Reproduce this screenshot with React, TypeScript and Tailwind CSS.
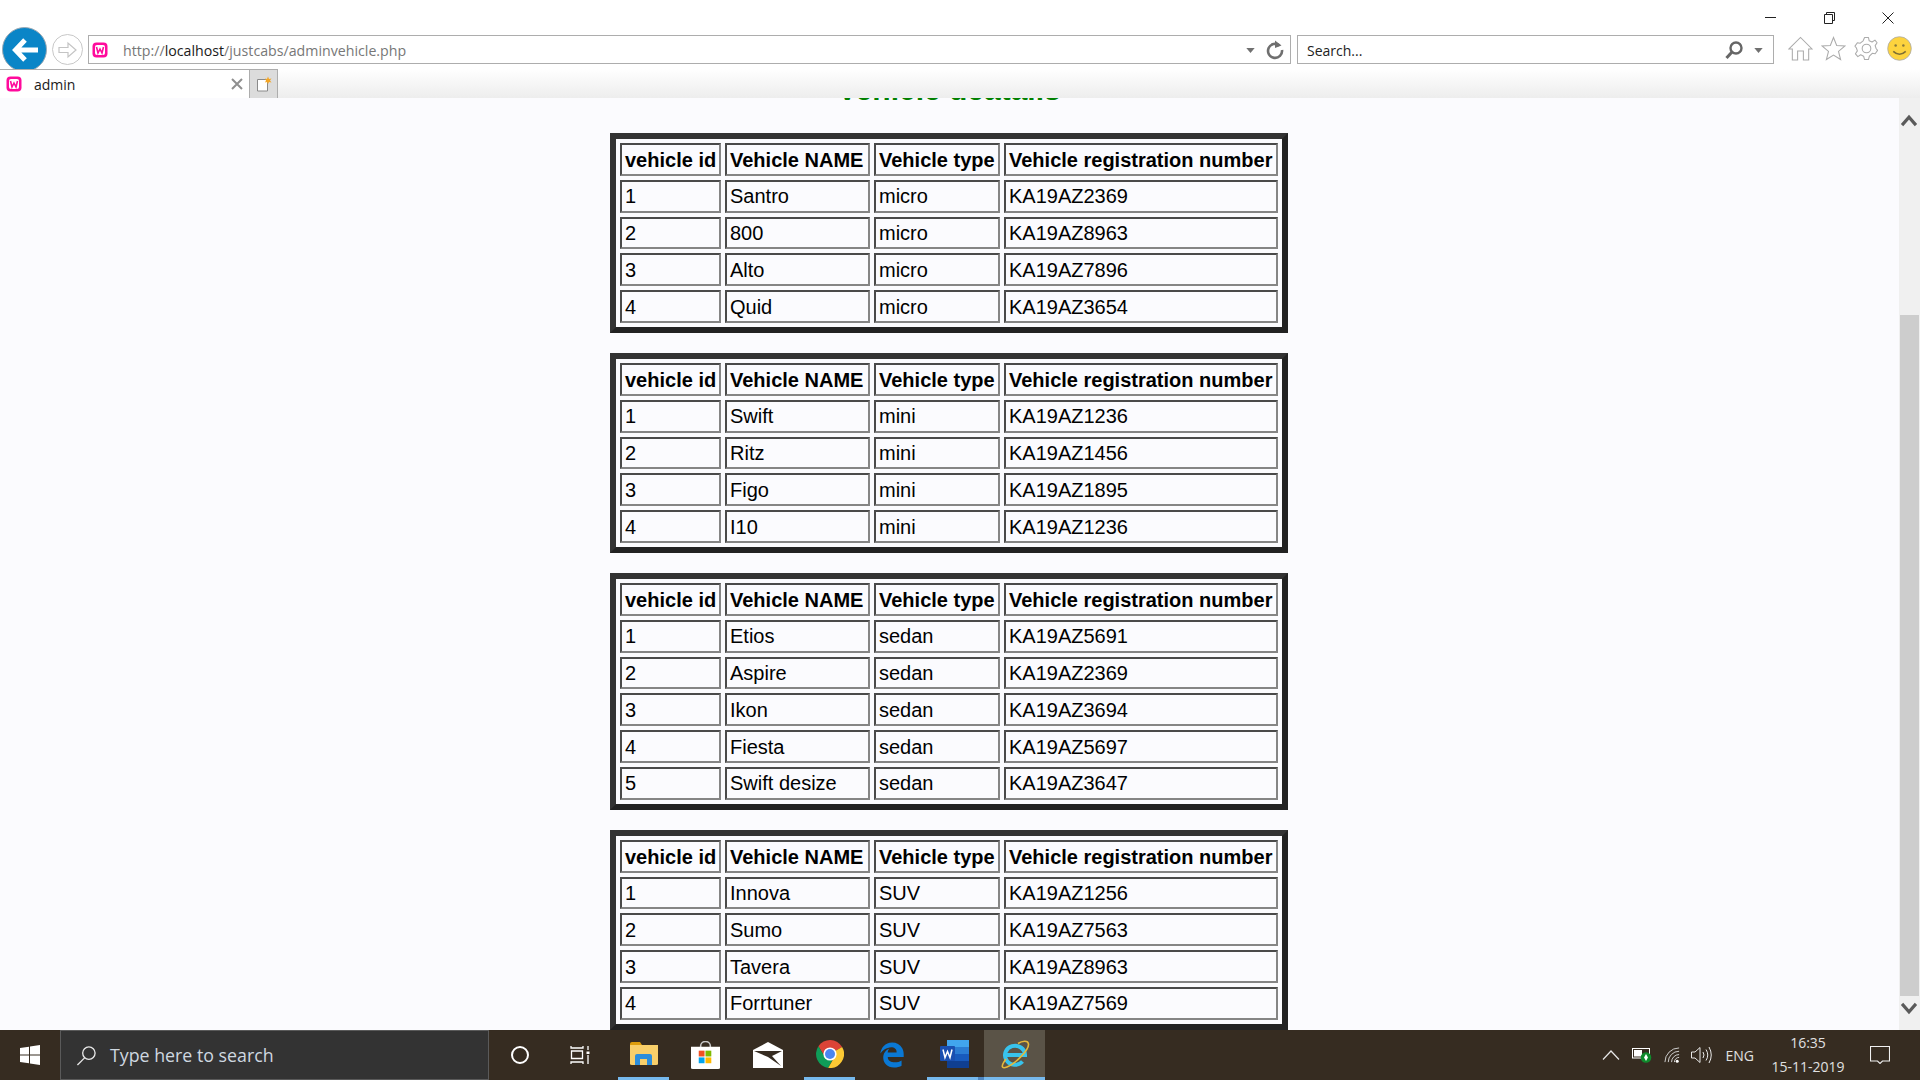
import { FaEdgeLegacy } from "react-icons/fa6";

type Row = [string, string, string];

const vehicleGroups: { type: string; rows: Row[] }[] = [
  {
    type: "micro",
    rows: [
      ["1", "Santro", "KA19AZ2369"],
      ["2", "800", "KA19AZ8963"],
      ["3", "Alto", "KA19AZ7896"],
      ["4", "Quid", "KA19AZ3654"],
    ],
  },
  {
    type: "mini",
    rows: [
      ["1", "Swift", "KA19AZ1236"],
      ["2", "Ritz", "KA19AZ1456"],
      ["3", "Figo", "KA19AZ1895"],
      ["4", "I10", "KA19AZ1236"],
    ],
  },
  {
    type: "sedan",
    rows: [
      ["1", "Etios", "KA19AZ5691"],
      ["2", "Aspire", "KA19AZ2369"],
      ["3", "Ikon", "KA19AZ3694"],
      ["4", "Fiesta", "KA19AZ5697"],
      ["5", "Swift desize", "KA19AZ3647"],
    ],
  },
  {
    type: "SUV",
    rows: [
      ["1", "Innova", "KA19AZ1256"],
      ["2", "Sumo", "KA19AZ7563"],
      ["3", "Tavera", "KA19AZ8963"],
      ["4", "Forrtuner", "KA19AZ7569"],
    ],
  },
];

const cell =
  "h-[32.8px] border-2 border-t-[#4a4a4a] border-l-[#4a4a4a] border-r-[#858585] border-b-[#858585] px-[3px] pb-0 text-left text-[20px] leading-[24px] whitespace-nowrap text-black";
const head = `${cell} pt-[2px] font-bold`;
const body = `${cell} pt-0`;

const VehicleTable = ({ type, rows }: { type: string; rows: Row[] }) => (
  <table className="w-[678px] table-fixed border-separate border-spacing-1 border-[6px] border-t-[#333333] border-l-[#333333] border-r-[#222222] border-b-[#222222]">
    <thead>
      <tr>
        <th className={`${head} w-[101px]`}>vehicle id</th>
        <th className={`${head} w-[145px]`}>Vehicle NAME</th>
        <th className={`${head} w-[126px]`}>Vehicle type</th>
        <th className={head}>Vehicle registration number</th>
      </tr>
    </thead>
    <tbody>
      {rows.map((r) => (
        <tr key={r[0]}>
          <td className={body}>{r[0]}</td>
          <td className={body}>{r[1]}</td>
          <td className={body}>{type}</td>
          <td className={body}>{r[2]}</td>
        </tr>
      ))}
    </tbody>
  </table>
);

const WampIcon = ({ className }: { className: string }) => (
  <svg viewBox="0 0 16 16" className={className}>
    <rect x="0.5" y="0.5" width="15" height="15" rx="4" fill="#ff0a9c" />
    <rect x="3" y="3" width="10" height="10" rx="2" fill="#fff" />
    <path d="M4.5 5 L6 11 L8 7 L10 11 L11.5 5" fill="none" stroke="#ff0a9c" strokeWidth="1.6" />
  </svg>
);

const BrowserChrome = () => (
  <header className="flex h-[98px] shrink-0 flex-col bg-white">
    <div className="flex h-[27px] shrink-0 items-start justify-end">
      <svg viewBox="0 0 12 12" className="mt-[12px] mr-[47px] size-3" stroke="#222" fill="none">
        <path d="M0 5.5 H11" />
      </svg>
      <svg viewBox="0 0 12 12" className="mt-[12px] mr-[46px] size-3" stroke="#222" fill="none">
        <path d="M2.5 2.5 V0.5 H10.5 V8.5 H8.5 M0.5 2.5 H8.5 V11.5 H0.5 Z" />
      </svg>
      <svg viewBox="0 0 12 12" className="mt-[12px] mr-[26px] size-3" stroke="#222" fill="none">
        <path d="M0.5 0.5 L11.5 11.5 M11.5 0.5 L0.5 11.5" />
      </svg>
    </div>

    <div className="flex h-[42px] shrink-0 items-start overflow-hidden pl-[2px]">
      <div className="flex size-[45px] shrink-0 items-center justify-center rounded-full border border-[#9aa9b4] bg-[#0a85c7]">
        <svg viewBox="0 0 28 28" className="size-[28px]" fill="none" stroke="#fff" strokeWidth="5">
          <path d="M14 4 L4.5 14 L14 24 M5 14 H27" />
        </svg>
      </div>
      <div className="mt-[7px] ml-[5px] flex size-[31px] shrink-0 items-center justify-center rounded-full border border-[#c8c8c8]">
        <svg viewBox="0 0 20 20" className="size-[20px]" fill="none" stroke="#c4c4c4" strokeWidth="1.2">
          <path d="M1 7.5 H10 V3 L18 10 L10 17 V12.5 H1 Z" />
        </svg>
      </div>
      <div className="mt-[8px] ml-[5px] flex h-[29px] w-[1203px] shrink-0 items-center border border-[#adadad] pr-[3px] pl-[3px]">
        <WampIcon className="size-4" />
        <span className="mt-[2px] ml-[15px] font-['Open_Sans',sans-serif] text-[14.2px] text-[#777777]">
          http://<span className="text-[#1a1a1a]">localhost</span>/justcabs/adminvehicle.php
        </span>
        <svg viewBox="0 0 10 6" className="mt-[2px] mr-[10px] ml-auto h-[5px] w-[9px]" fill="#707070">
          <path d="M0 0 H10 L5 6 Z" />
        </svg>
        <svg viewBox="0 0 20 20" className="mr-[2px] size-[20px]" fill="none" stroke="#6f6f6f" strokeWidth="2.6">
          <path d="M14.5 5.5 A7 7 0 1 0 17 10" />
          <path d="M10 0.5 L16.5 5.5 L10 8 Z" fill="#6f6f6f" stroke="none" />
        </svg>
      </div>
      <div className="mt-[8px] ml-[6px] flex h-[29px] w-[477px] shrink-0 items-center border border-[#adadad] pr-[10px] pl-[9px]">
        <span className="mt-[1px] font-['Open_Sans',sans-serif] text-[14px] text-[#222222]">Search...</span>
        <svg viewBox="0 0 20 20" className="mr-[10px] ml-auto size-[20px]" fill="none" stroke="#666" strokeWidth="2.4">
          <circle cx="12" cy="8" r="5.5" />
          <path d="M8 12 L2.5 18" strokeWidth="3" />
        </svg>
        <svg viewBox="0 0 10 6" className="mt-[2px] h-[5px] w-[9px]" fill="#707070">
          <path d="M0 0 H10 L5 6 Z" />
        </svg>
      </div>
      <div className="mt-[9px] ml-[14px] flex items-center gap-[8px]">
        <svg viewBox="0 0 26 26" className="size-[25px]" fill="none" stroke="#ababab" strokeWidth="1.1">
          <path d="M1 13.5 L13 1.5 L25 13.5 L21.5 13.5 V25 H16 V15.5 H10 V25 H4.5 V13.5 Z" />
        </svg>
        <svg viewBox="0 0 26 26" className="size-[25px]" fill="none" stroke="#ababab" strokeWidth="1.1">
          <path d="M13 1.5 L16.3 9.8 L25 10.3 L18.2 16 L20.4 24.5 L13 19.8 L5.6 24.5 L7.8 16 L1 10.3 L9.7 9.8 Z" />
        </svg>
        <svg viewBox="0 0 26 26" className="size-[25px]" fill="none" stroke="#ababab" strokeWidth="1.1">
          <circle cx="13" cy="13" r="4.5" />
          <path d="M11 1.5 H15 L15.8 5 L18.8 6.3 L21.8 4.3 L24 7 L22 10 L23 13 L24.5 15 L22 18.5 L19 18 L16 21 L15 24.5 H11 L10 21 L7 19.5 L4 21.5 L1.5 18.5 L3.5 15.5 L2.5 12.5 L1 10.5 L3.5 7 L6.5 7.5 L9.5 5 Z" strokeLinejoin="round" />
        </svg>
        <svg viewBox="0 0 26 26" className="size-[25px]">
          <circle cx="13" cy="13" r="12.3" fill="#fdd33e" stroke="#a8a8a8" strokeWidth="0.8" />
          <circle cx="9" cy="10" r="1.3" fill="#8a7a3a" />
          <circle cx="17" cy="10" r="1.3" fill="#8a7a3a" />
          <path d="M6.5 16 Q13 22 19.5 16" fill="none" stroke="#7e6f33" strokeWidth="1.6" />
        </svg>
      </div>
    </div>

    <div className="flex h-[29px] shrink-0 bg-gradient-to-b from-white to-[#ededed]">
      <div className="flex w-[250px] items-center border-t border-r border-[#adadad] bg-white pl-[6px]">
        <WampIcon className="size-[16px]" />
        <span className="ml-[12px] font-['Open_Sans',sans-serif] text-[14px] text-[#1a1a1a]">admin</span>
        <svg viewBox="0 0 12 12" className="mr-[6px] ml-auto size-3" fill="none" stroke="#8f8f8f" strokeWidth="2">
          <path d="M1 1 L11 11 M11 1 L1 11" />
        </svg>
      </div>
      <div className="flex w-[28px] items-center justify-center border-t border-r border-[#adadad] bg-[#dcdcdc]">
        <svg viewBox="0 0 16 16" className="size-[16px]">
          <path d="M1.5 3.5 H11.5 V15 H1.5 Z" fill="#fff" stroke="#8a8a8a" />
          <path d="M12 0.5 L13 3 L15.5 2.5 L14 4.5 L15.5 6.5 L13 6 L12 8 L11 6 L9 6.5 L10 4.5 L9 2.5 L11 3 Z" fill="#f5a623" />
        </svg>
      </div>
    </div>
  </header>
);

const Scrollbar = () => (
  <div className="flex w-[21px] shrink-0 flex-col bg-[#f0f0f0] pl-px">
    <svg viewBox="0 0 18 14" className="mt-[16px] h-[13px] w-[18px] shrink-0" fill="none" stroke="#5a5a5a" strokeWidth="3.4">
      <path d="M1.5 12 L9 3.5 L16.5 12" />
    </svg>
    <div className="mt-[188px] h-[681px] w-[19px] shrink-0 bg-[#cdcdcd]" />
    <svg viewBox="0 0 18 14" className="mt-[6px] h-[13px] w-[18px] shrink-0" fill="none" stroke="#5a5a5a" strokeWidth="3.4">
      <path d="M1.5 2 L9 10.5 L16.5 2" />
    </svg>
  </div>
);

const Slot = ({ className, children }: { className: string; children: React.ReactNode }) => (
  <div className={`flex h-full items-center justify-center ${className}`}>{children}</div>
);

const Taskbar = () => (
  <footer className="flex h-[50px] shrink-0 items-stretch bg-[#362c21] text-white">
    <Slot className="w-[60px]">
      <svg viewBox="0 0 20 20" className="size-[20px]" fill="#fff">
        <path d="M0 3 L9 1.7 V9.5 H0 Z M10 1.5 L20 0 V9.5 H10 Z M0 10.5 H9 V18.3 L0 17 Z M10 10.5 H20 V20 L10 18.5 Z" />
      </svg>
    </Slot>
    <div className="flex w-[429px] items-center border border-[#5a5a5a] bg-[#333333] pl-[15px]">
      <svg viewBox="0 0 22 22" className="size-[21px]" fill="none" stroke="#e8e8e8" strokeWidth="1.4">
        <circle cx="13.5" cy="8.5" r="6.5" />
        <path d="M9 13.5 L1.5 21" />
      </svg>
      <span className="ml-[13px] font-['Open_Sans',sans-serif] text-[17.8px] text-[#cfd8e0]">Type here to search</span>
    </div>
    <Slot className="w-[61px]">
      <div className="size-[18px] rounded-full border-[2.5px] border-white" />
    </Slot>
    <Slot className="w-[59px]">
      <svg viewBox="0 0 20 20" className="size-[20px]" fill="none" stroke="#fff" strokeWidth="1.3">
        <path d="M1 1 V3 H13 V1 M1.5 6 H12.5 V13.5 H1.5 Z M1 19 V17 H13 V19 M18 1 V5 M18 10 V19" />
        <rect x="16.5" y="6.5" width="3" height="2.5" fill="#fff" stroke="none" />
      </svg>
    </Slot>
    <Slot className="ml-[9px] w-[51px] border-b-[3px] border-[#76b9ed]">
      <svg viewBox="0 0 28 24" className="h-[24px] w-[28px]">
        <path d="M0 2 Q0 0 2 0 H10 L12 3 H0 Z" fill="#dd9d0c" />
        <path d="M0 3 H28 V22 Q28 23 26 23 H2 Q0 23 0 22 Z" fill="#f8cf6a" />
        <path d="M5 23 V14 Q5 12 7 12 H20 Q22 12 22 14 V23 H17 V17 H10 V23 Z" fill="#2c8edb" />
      </svg>
    </Slot>
    <Slot className="ml-[11px] w-[51px]">
      <svg viewBox="0 0 30 30" className="size-[29px]">
        <path d="M10 7 V5 A5 4.5 0 0 1 20 5 V7" fill="none" stroke="#c9c9c9" strokeWidth="1.6" />
        <path d="M0 6 H30 V28 Q30 29 28 29 H2 Q0 29 0 28 Z" fill="#fff" />
        <rect x="8" y="10" width="6" height="6" fill="#f25022" />
        <rect x="15" y="10" width="6" height="6" fill="#7fba00" />
        <rect x="8" y="17" width="6" height="6" fill="#00a4ef" />
        <rect x="15" y="17" width="6" height="6" fill="#ffb900" />
      </svg>
    </Slot>
    <Slot className="ml-[11px] w-[51px]">
      <svg viewBox="0 0 30 26" className="h-[26px] w-[30px]">
        <path d="M0 8 L15 0 L30 8 V26 H0 Z" fill="#fff" />
        <path d="M1 9 H29 L19 14 L28 24 L15 15 Z" fill="#362c21" />
      </svg>
    </Slot>
    <Slot className="ml-[11px] w-[51px] border-b-[3px] border-[#76b9ed]">
      <svg viewBox="0 0 28 28" className="size-[28px]">
        <path d="M14 14 L26.1 7 A14 14 0 0 0 2.4 6.2 L8 15.5 Z" fill="#db4437" />
        <path d="M14 14 L8 15.5 L2.4 6.2 A14 14 0 0 0 12.2 27.9 L17.5 18 Z" fill="#0f9d58" />
        <path d="M14 14 L26.1 7 A14 14 0 0 1 12.2 27.9 L19 16 Z" fill="#fcc934" />
        <circle cx="14" cy="14" r="6.6" fill="#fff" />
        <circle cx="14" cy="14" r="5" fill="#4a86f0" />
      </svg>
    </Slot>
    <Slot className="ml-[11px] w-[51px]">
      <FaEdgeLegacy className="size-[26px] text-[#0a78d4]" />
    </Slot>
    <div className="ml-[10px] flex w-[51px] border-b-[3px] border-[#76b9ed]">
      <Slot className="w-full pl-[3px]">
        <svg viewBox="0 0 29 28" className="h-[28px] w-[29px]">
          <rect x="7" y="0" width="22" height="7" fill="#41a5ee" />
          <rect x="7" y="7" width="22" height="7" fill="#2b7cd3" />
          <rect x="7" y="14" width="22" height="7" fill="#185abd" />
          <rect x="7" y="21" width="22" height="7" fill="#103f91" />
          <rect x="0" y="6" width="15" height="15" rx="1" fill="#1a4fb0" />
          <path d="M3 9.5 L5 17.5 L7.5 11.5 L10 17.5 L12 9.5" fill="none" stroke="#fff" strokeWidth="1.5" />
        </svg>
      </Slot>
    </div>
    <div className="w-[6px] border-b-[3px] border-[#4f86c0]" />
    <Slot className="w-[61px] border-b-[3px] border-[#76b9ed] bg-[#5a5347]">
      <svg viewBox="0 0 30 30" className="size-[30px]" fill="none">
        <path d="M5.5 16 H25 A10 9.5 0 1 0 22.5 22.5" stroke="#38c3ec" strokeWidth="4" />
        <path d="M6 20 C0 28 2 30 7 28 C15 25 29 11 28.5 5 C28 1 22 2 18 4.5" stroke="#e6b93a" strokeWidth="1.6" />
      </svg>
    </Slot>

    <div className="ml-auto flex items-center">
      <svg viewBox="0 0 18 10" className="h-[10px] w-[18px]" fill="none" stroke="#e8e8e8" strokeWidth="1.2">
        <path d="M1 9.5 L9 1 L17 9.5" />
      </svg>
      <svg viewBox="0 0 20 16" className="ml-[12px] h-[16px] w-[20px]">
        <rect x="0.5" y="1.5" width="17" height="9.5" fill="none" stroke="#fff" />
        <rect x="2" y="3" width="8" height="6.5" fill="#fff" />
        <circle cx="14" cy="10.5" r="5.3" fill="#0f8a2c" />
        <path d="M14 7 L16 10.5 L14 14 L12 10.5 Z" fill="#fff" />
      </svg>
      <svg viewBox="0 0 18 18" className="ml-[12px] size-[17px]" fill="none" stroke="#d8d8d8" strokeWidth="1">
        <path d="M1 16 A15 15 0 0 1 16 1 M4.5 16 A11.5 11.5 0 0 1 16 4.5 M8 16 A8 8 0 0 1 16 8 M11 16 A5 5 0 0 1 16 11" />
        <circle cx="14" cy="15" r="1.6" fill="#fff" stroke="none" />
      </svg>
      <svg viewBox="0 0 21 18" className="ml-[10px] h-[18px] w-[21px]" fill="none" stroke="#e8e8e8" strokeWidth="1">
        <path d="M0.5 6 H4 L9 1.5 V16.5 L4 12 H0.5 Z" />
        <path d="M12 6 Q14 9 12 12 M15 3.5 Q18.5 9 15 14.5 M18 1 Q22.5 9 18 17" />
      </svg>
      <span className="ml-[14px] font-['Open_Sans',sans-serif] text-[14px] text-[#e0e0e0]">ENG</span>
      <div className="ml-[16px] flex w-[76px] flex-col items-center font-['Open_Sans',sans-serif] text-[14px] leading-[24px] text-[#e0e0e0]">
        <span>16:35</span>
        <span>15-11-2019</span>
      </div>
      <svg viewBox="0 0 20 18" className="mr-[30px] ml-[24px] h-[18px] w-[20px]" fill="none" stroke="#f0f0f0" strokeWidth="1.1">
        <path d="M0.5 0.5 H19.5 V15 H12.5 L10 17.5 L7.5 15 H0.5 Z" />
      </svg>
    </div>
  </footer>
);

export default function App() {
  return (
    <div className="flex h-screen w-full flex-col overflow-hidden font-['Liberation_Sans',Arial,sans-serif]">
      <BrowserChrome />
      <div className="flex min-h-0 flex-1">
        <main className="flex min-w-0 flex-1 flex-col items-center overflow-hidden bg-[#fbfbfe] pr-px">
          <h1 className="-mt-[26px] mb-[25px] h-[36px] shrink-0 text-[30px] leading-[36px] font-bold text-[#008000]">
            Vehicle deatails
          </h1>
          <div className="flex shrink-0 flex-col gap-[20px]">
            {vehicleGroups.map((g) => (
              <VehicleTable key={g.type} type={g.type} rows={g.rows} />
            ))}
          </div>
        </main>
        <Scrollbar />
      </div>
      <Taskbar />
    </div>
  );
}
